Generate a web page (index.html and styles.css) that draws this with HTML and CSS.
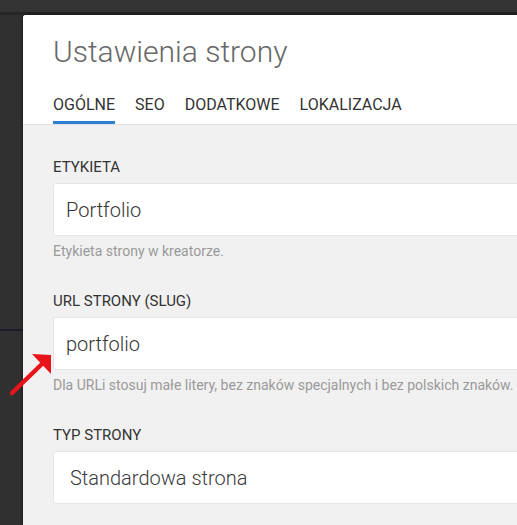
FILE: index.html
```html
<!DOCTYPE html>
<html lang="pl">
<head>
<meta charset="utf-8">
<title>Ustawienia strony</title>
<link rel="stylesheet" href="styles.css">
</head>
<body>
<div class="page">
  <div class="topbar"></div>
  <div class="main">
    <div class="sidebar"><div class="sidebar-line"></div></div>
    <div class="modal">
      <div class="modal-header">
        <h1 class="title">Ustawienia strony</h1>
        <nav class="tabs">
          <span class="tab active">OGÓLNE</span>
          <span class="tab">SEO</span>
          <span class="tab">DODATKOWE</span>
          <span class="tab">LOKALIZACJA</span>
        </nav>
      </div>
      <div class="modal-body">
        <div class="field">
          <div class="label">ETYKIETA</div>
          <div class="input">Portfolio</div>
          <div class="help">Etykieta strony w kreatorze.</div>
        </div>
        <div class="field">
          <div class="label">URL STRONY (SLUG)</div>
          <div class="input">portfolio</div>
          <div class="help">Dla URLi stosuj małe litery, bez znaków specjalnych i bez polskich znaków.</div>
        </div>
        <div class="field">
          <div class="label">TYP STRONY</div>
          <div class="input select">Standardowa strona</div>
        </div>
      </div>
    </div>
  </div>
  <svg class="arrow" width="60" height="60" viewBox="0 0 60 60">
    <line x1="12" y1="52" x2="44" y2="21" stroke="#e8141b" stroke-width="4.5" stroke-linecap="round"/>
    <polygon points="51,14 32,13 51,33" fill="#e8141b"/>
  </svg>
</div>
</body>
</html>
```
FILE: styles.css
```css
html, body {
  margin: 0;
  padding: 0;
  background: #2f2f2f;
  overflow: hidden;
}
body {
  font-family: Roboto, "Liberation Sans", sans-serif;
  width: 517px;
  height: 525px;
}
.page {
  position: relative;
  width: 517px;
  height: 525px;
  overflow: hidden;
  display: flex;
  flex-direction: column;
}
.topbar {
  height: 15px;
  flex: none;
  background: linear-gradient(#333 0, #333 12px, #262626 12px, #262626 15px);
}
.main {
  display: flex;
  flex: 1;
  min-height: 0;
}
.sidebar {
  width: 23px;
  flex: none;
  background: #303030;
  padding-top: 314px;
  box-sizing: border-box;
}
.sidebar-line {
  height: 2px;
  background: #1b1b2c;
}
.modal {
  width: 640px;
  flex: none;
  background: #f1f1f1;
  border-top-left-radius: 3px;
  box-shadow: -1px -1px 3px rgba(0,0,0,0.4);
}
.modal-header {
  background: #fff;
  padding: 19px 30px 0;
  border-bottom: 1px solid #e0e0e0;
  border-top-left-radius: 3px;
}
.title {
  margin: 0;
  font-size: 30px;
  line-height: 36px;
  font-weight: 300;
  color: #686868;
}
.tabs {
  display: flex;
  gap: 20px;
  margin-top: 25px;
}
.tab {
  font-size: 16px;
  line-height: 20px;
  color: #333;
  padding-bottom: 6px;
  border-bottom: 3px solid transparent;
}
.tab.active {
  border-bottom-color: #2e80d2;
}
.modal-body {
  padding: 33px 30px 0;
}
.field {
  margin-bottom: 33px;
}
.label {
  font-size: 15px;
  line-height: 18px;
  color: #333;
}
.input {
  margin-top: 7px;
  height: 53px;
  box-sizing: border-box;
  background: #fff;
  border: 1px solid #e6e6e6;
  border-radius: 3px;
  display: flex;
  align-items: center;
  padding: 0 12px;
  font-size: 20px;
  font-weight: 300;
  color: #333;
}
.input.select {
  padding-left: 16px;
  color: #3a3a3a;
}
.help {
  margin-top: 7px;
  font-size: 14px;
  line-height: 16px;
  color: #9a9a9a;
  white-space: nowrap;
}
.arrow {
  position: absolute;
  left: 0;
  top: 341px;
}
```
